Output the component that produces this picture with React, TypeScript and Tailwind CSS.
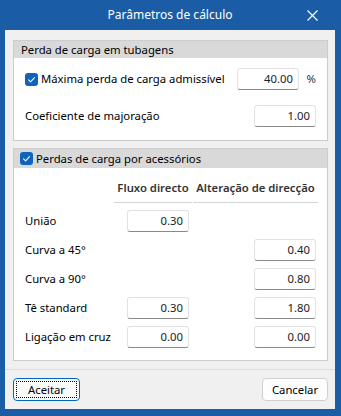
import React from 'react'

function CheckBox() {
  return (
    <svg width="13" height="13" viewBox="0 0 13 13" className="shrink-0">
      <rect x="0" y="0" width="13" height="13" rx="3" fill="#0f63bd" />
      <path d="M3.6 6.9 L5.6 8.8 L9.5 4.7" fill="none" stroke="#ffffff" strokeWidth="1.1" strokeLinecap="round" strokeLinejoin="round" />
    </svg>
  )
}

function NumField({ value }: { value: string }) {
  return (
    <div className="w-[62px] h-[22px] bg-white border border-[#e2e2e2] border-b-[#8a8a8a] rounded-[3px] flex items-center justify-end pr-[5px] text-[#1b1b1b]">
      {value}
    </div>
  )
}

type Row = { label: string; direct?: string; change?: string }

const rows: Row[] = [
  { label: 'União', direct: '0.30' },
  { label: 'Curva a 45°', change: '0.40' },
  { label: 'Curva a 90°', change: '0.80' },
  { label: 'Tê standard', direct: '0.30', change: '1.80' },
  { label: 'Ligação em cruz', direct: '0.00', change: '0.00' },
]

export default function App() {
  return (
    <div className="w-[341px] h-[416px] bg-[#1a5ca6] flex flex-col pl-[5px] pr-[6px] pb-[7px] font-['Noto_Sans',sans-serif] text-[11.3px] leading-[16px] text-black">
      {/* Title bar */}
      <div className="h-[30px] flex items-center shrink-0">
        <div className="w-[46px]" />
        <div className="flex-1 text-center text-white text-[12px]">Parâmetros de cálculo</div>
        <div className="w-[46px] flex items-center justify-center">
          <svg width="11" height="11" viewBox="0 0 11 11">
            <path d="M0.5 0.5 L10.5 10.5 M10.5 0.5 L0.5 10.5" stroke="#ffffff" strokeWidth="1.2" />
          </svg>
        </div>
      </div>

      {/* Body */}
      <div className="flex-1 bg-[#f0f0f0] flex flex-col">
        <div className="pt-[10px] pl-[8px] pr-[7px] flex flex-col gap-[7px]">
          {/* Perda de carga em tubagens */}
          <div className="border border-[#cccccc] bg-white">
            <div className="h-[17px] bg-[#d9d9d9] flex items-center pl-[7px]">Perda de carga em tubagens</div>
            <div className="pt-[10px] pb-[13px] pl-[11px] pr-[11px] flex flex-col gap-[15px]">
              <div className="flex items-center h-[22px]">
                <CheckBox />
                <span className="ml-[3px] flex-1 whitespace-nowrap">Máxima perda de carga admissível</span>
                <NumField value="40.00" />
                <span className="w-[17px] text-right text-[#333]">%</span>
              </div>
              <div className="flex items-center h-[22px]">
                <span className="flex-1">Coeficiente de majoração</span>
                <NumField value="1.00" />
              </div>
            </div>
          </div>

          {/* Perdas de carga por acessórios */}
          <div className="border border-[#cccccc] bg-white">
            <div className="h-[19px] bg-[#d9d9d9] flex items-center pl-[6px] gap-[3px]">
              <CheckBox />
              <span>Perdas de carga por acessórios</span>
            </div>
            <div className="pl-[11px] pb-[12px] grid grid-cols-[88px_78px_125px] gap-x-px gap-y-[7px]">
              <div />
              <div className="pt-[12px] pb-[6px] border-b border-[#d4d4d4] text-center font-semibold text-[#333] whitespace-nowrap">
                Fluxo directo
              </div>
              <div className="pt-[12px] pb-[6px] border-b border-[#d4d4d4] text-center font-semibold text-[#333] whitespace-nowrap">
                Alteração de direcção
              </div>
              {rows.map((r) => (
                <React.Fragment key={r.label}>
                  <div className="h-[22px] flex items-center whitespace-nowrap">{r.label}</div>
                  <div className="h-[22px] flex justify-end pr-[3px]">{r.direct && <NumField value={r.direct} />}</div>
                  <div className="h-[22px] flex justify-end pr-[2px]">{r.change && <NumField value={r.change} />}</div>
                </React.Fragment>
              ))}
            </div>
          </div>
        </div>

        <div className="mt-[8px] border-t border-[#dcdcdc]" />

        {/* Footer */}
        <div className="pt-[8px] pl-[8px] pr-[7px] flex justify-between">
          <button className="w-[67px] h-[23px] rounded-[4px] border border-[#0067c0] bg-[#fbfbfb] p-[2px] flex">
            <span className="flex-1 border border-dotted border-black flex items-center justify-center">Aceitar</span>
          </button>
          <button className="w-[66px] h-[23px] rounded-[4px] border border-[#d0d0d0] bg-[#fdfdfd] flex items-center justify-center">
            Cancelar
          </button>
        </div>
      </div>
    </div>
  )
}
